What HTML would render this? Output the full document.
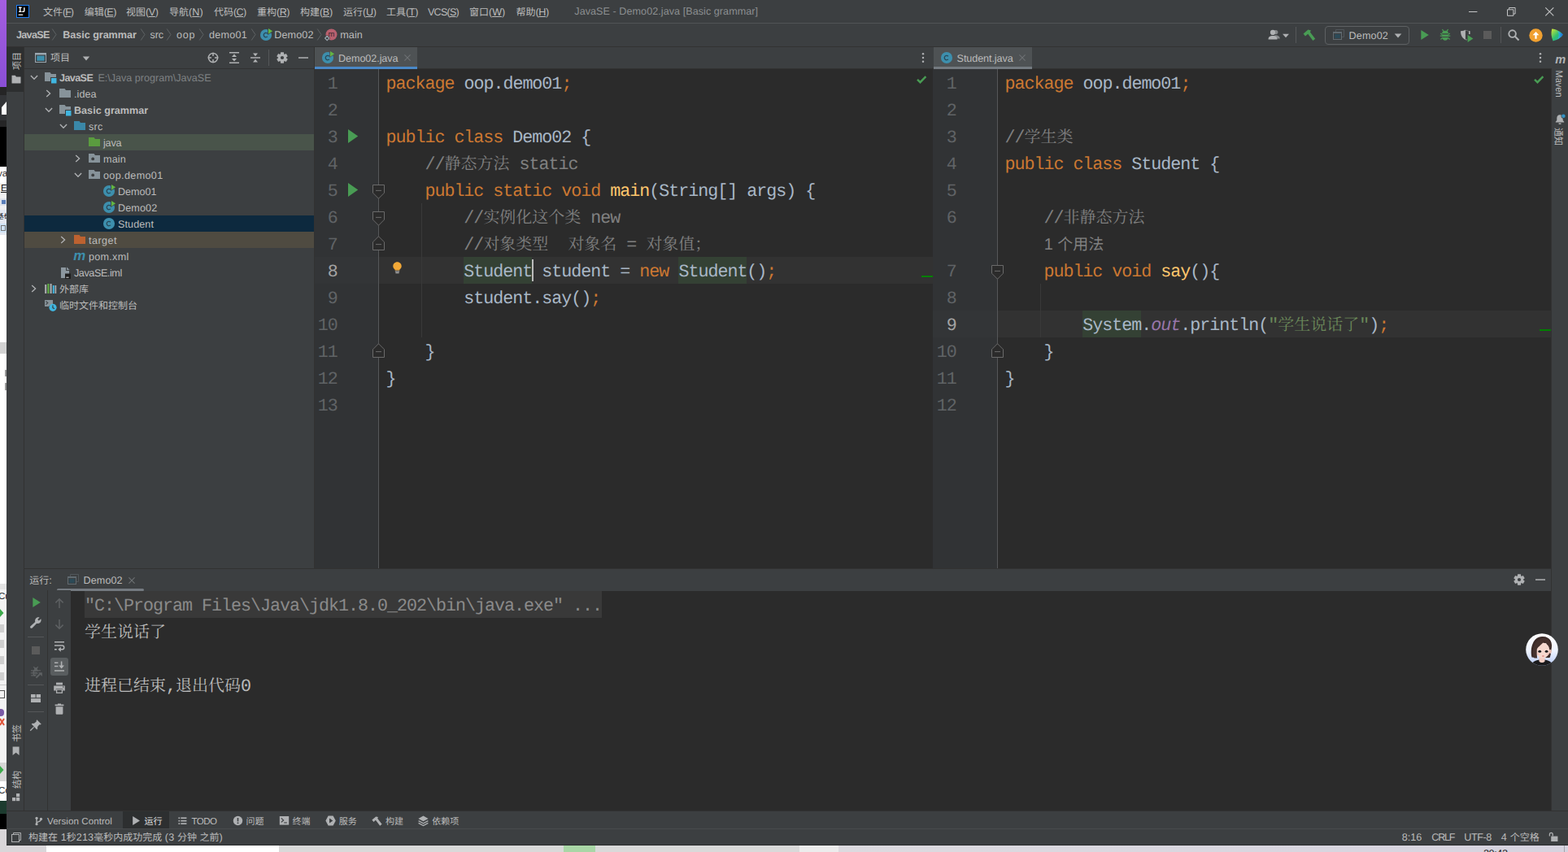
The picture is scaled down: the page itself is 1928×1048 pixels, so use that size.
<!DOCTYPE html>
<html lang="zh-CN"><head><meta charset="utf-8"><title>JavaSE - Demo02.java [Basic grammar]</title>
<style>
html,body{margin:0;padding:0}
body{width:1928px;height:1048px;overflow:hidden;position:relative;background:#3c3f41;color:#bbbbbb;
 font-family:"Liberation Sans","Noto Sans CJK SC",sans-serif;font-size:12px;text-rendering:geometricPrecision}
div,span.t,svg.i{position:absolute}
span.t,div.t{white-space:pre}
span.z{font-family:"Liberation Sans","Noto Sans CJK SC",sans-serif;letter-spacing:0}
span.zr{font-family:"Liberation Serif","Noto Serif CJK SC",serif;letter-spacing:0;font-size:20px}
svg.i{display:block;overflow:visible}
div.c{font-family:"Liberation Mono",monospace;font-size:21.66px;letter-spacing:-0.9981px;line-height:33px;height:33px;white-space:pre}
div.c span{position:static}
u{text-decoration-thickness:1px;text-underline-offset:1px}
</style></head>
<body>
<div style="left:0px;top:0px;width:8px;height:107px;background:linear-gradient(180deg,#a45ee0,#8a4fd6);"></div>
<div style="left:0px;top:107px;width:8px;height:10px;background:#252526;"></div>
<div style="left:0px;top:117px;width:8px;height:31px;background:#323437;"></div>
<svg class="i" style="left:0px;top:124px;" width="8" height="18" viewBox="0 0 8 18"><path d="M2 8 8 1V17H2Z" fill="#fff"/></svg>
<div style="left:0px;top:148px;width:8px;height:8px;background:#252526;"></div>
<div style="left:0px;top:156px;width:8px;height:49px;background:#000;"></div>
<div style="left:0px;top:205px;width:8px;height:835px;background:#fff;"></div>
<div style="left:0px;top:225px;width:8px;height:33px;background:#f0f0f0;"></div>
<span class="t" style="left:-3px;top:206px;line-height:16px;font-size:11.55px;color:#333;">va</span>
<span class="t" style="left:1px;top:224px;line-height:16px;font-size:11.55px;color:#111;text-decoration:underline;">E</span>
<div style="left:0px;top:244px;width:8px;height:9px;background:#dfe3ea;"></div>
<div style="left:2px;top:246px;width:5px;height:5px;background:#5b7fb8;"></div>
<div style="left:0px;top:258px;width:8px;height:31px;background:#e3e8f1;"></div>
<div style="left:0px;top:262px;width:8px;height:10px;overflow:hidden;color:#111;line-height:10px;font-size:10px;text-indent:-5px;white-space:nowrap;"><span class="z" style="font-size:10px;">基础</span></div>
<div style="left:0px;top:275px;width:8px;height:11px;background:#cfe3f7;"></div>
<div style="left:1px;top:277px;width:6px;height:7px;border:1px solid #777;box-sizing:border-box;"></div>
<div style="left:0px;top:421px;width:8px;height:14px;background:#d2d2d2;"></div>
<div style="left:6px;top:455px;width:2px;height:8px;background:#9a9a9a;"></div>
<div style="left:6px;top:471px;width:2px;height:9px;background:#9a9a9a;"></div>
<div style="left:0px;top:718px;width:8px;height:7px;background:#e4e4e4;"></div>
<div style="left:0px;top:725px;width:8px;height:213px;background:#f3f3f3;"></div>
<span class="t" style="left:-2px;top:726px;line-height:16px;font-size:11.55px;color:#222;">Cur</span>
<svg class="i" style="left:0px;top:749px;" width="8" height="10" viewBox="0 0 8 10"><path d="M0 0 4.5 5 0 10Z" fill="#3daa4c"/></svg>
<div style="left:0px;top:768px;width:5px;height:10px;background:#cfcfcf;"></div>
<div style="left:0px;top:787px;width:5px;height:10px;background:#cfcfcf;"></div>
<div style="left:0px;top:807px;width:5px;height:10px;background:#cfcfcf;"></div>
<div style="left:0px;top:827px;width:5px;height:10px;background:#cfcfcf;"></div>
<div style="left:0px;top:842px;width:8px;height:1px;background:#c9c9c9;"></div>
<div style="left:0px;top:849px;width:6px;height:10px;border:1.5px solid #555;border-left:0;box-sizing:border-box;"></div>
<div style="left:0px;top:872px;width:5px;height:9px;background:#7a5aa6;border-radius:0 4px 4px 0;"></div>
<svg class="i" style="left:0px;top:883px;" width="8" height="10" viewBox="0 0 8 10"><path d="M0 1 5 9M5 1 0 9" stroke="#e0553a" stroke-width="2"/></svg>
<div style="left:0px;top:938px;width:8px;height:23px;background:#d6d6d6;"></div>
<svg class="i" style="left:0px;top:942px;" width="8" height="10" viewBox="0 0 8 10"><path d="M0 0 4.5 5 0 10Z" fill="#3daa4c"/></svg>
<span class="t" style="left:-2px;top:965px;line-height:16px;font-size:11.55px;color:#222;">Co</span>
<div style="left:0px;top:985px;width:8px;height:16px;background:#1d3b2f;"></div>
<div style="left:0px;top:1001px;width:8px;height:19px;background:#000;"></div>
<div style="left:0px;top:1020px;width:8px;height:28px;background:#d9d6d9;"></div>
<div style="left:0px;top:1040px;width:57px;height:8px;background:#d9d6d9;"></div>
<div style="left:57px;top:1040px;width:286px;height:8px;background:#ffffff;"></div>
<div style="left:343px;top:1040px;width:350px;height:8px;background:#d9d9d9;"></div>
<div style="left:693px;top:1040px;width:39px;height:8px;background:#a9d6a6;"></div>
<div style="left:732px;top:1040px;width:251px;height:8px;background:#d9d9d9;"></div>
<div style="left:983px;top:1040px;width:48px;height:8px;background:#ececec;"></div>
<div style="left:1031px;top:1040px;width:897px;height:8px;background:linear-gradient(90deg,#dcdadf,#d6d3df);"></div>
<span class="t" style="left:1824px;top:1042px;line-height:16px;font-size:12.6px;color:#222;letter-spacing:-0.406px;">20:42</span>
<div style="left:1923px;top:1040px;width:1px;height:8px;background:#a5a3aa;"></div>
<div style="left:8px;top:0px;width:1920px;height:28px;background:#3c3f41;"></div>
<div style="left:8px;top:28px;width:1920px;height:1px;background:#515456;"></div>
<svg class="i" style="left:20px;top:6px;" width="16" height="16" viewBox="0 0 16 16"><rect x="0.5" y="0.5" width="15" height="15" fill="#000" stroke="#1f7ff5" stroke-width="1"/><path d="M3 3.3H6.6M4.8 3.3V8.4M3 8.4H6.6" stroke="#fff" stroke-width="1.4" fill="none"/><path d="M9.8 3.3V7.2C9.8 8.5 8.2 8.8 7.4 7.8" stroke="#fff" stroke-width="1.4" fill="none"/><rect x="2.6" y="11.6" width="5.6" height="1.2" fill="#fff"/></svg>
<span class="t" style="left:53px;top:7px;line-height:16px;font-size:12.6px;letter-spacing:-1.029px;"><span class="z" style="font-size:12px;">文件</span>(<u>F</u>)</span>
<span class="t" style="left:103.7px;top:7px;line-height:16px;font-size:12.6px;letter-spacing:-0.599px;"><span class="z" style="font-size:12px;">编辑</span>(<u>E</u>)</span>
<span class="t" style="left:155px;top:7px;line-height:16px;font-size:12.6px;letter-spacing:-0.399px;"><span class="z" style="font-size:12px;">视图</span>(<u>V</u>)</span>
<span class="t" style="left:208px;top:7px;line-height:16px;font-size:12.6px;letter-spacing:0.103px;"><span class="z" style="font-size:12px;">导航</span>(<u>N</u>)</span>
<span class="t" style="left:263px;top:7px;line-height:16px;font-size:12.6px;letter-spacing:-0.664px;"><span class="z" style="font-size:12px;">代码</span>(<u>C</u>)</span>
<span class="t" style="left:316px;top:7px;line-height:16px;font-size:12.6px;letter-spacing:-0.564px;"><span class="z" style="font-size:12px;">重构</span>(<u>R</u>)</span>
<span class="t" style="left:369px;top:7px;line-height:16px;font-size:12.6px;letter-spacing:-0.365px;"><span class="z" style="font-size:12px;">构建</span>(<u>B</u>)</span>
<span class="t" style="left:422px;top:7px;line-height:16px;font-size:12.6px;letter-spacing:-0.330px;"><span class="z" style="font-size:12px;">运行</span>(<u>U</u>)</span>
<span class="t" style="left:475px;top:7px;line-height:16px;font-size:12.6px;letter-spacing:-0.363px;"><span class="z" style="font-size:12px;">工具</span>(<u>T</u>)</span>
<span class="t" style="left:526px;top:7px;line-height:16px;font-size:12.6px;letter-spacing:-0.784px;">VCS(<u>S</u>)</span>
<span class="t" style="left:577px;top:7px;line-height:16px;font-size:12.6px;letter-spacing:-0.095px;"><span class="z" style="font-size:12px;">窗口</span>(<u>W</u>)</span>
<span class="t" style="left:634.5px;top:7px;line-height:16px;font-size:12.6px;letter-spacing:-0.430px;"><span class="z" style="font-size:12px;">帮助</span>(<u>H</u>)</span>
<span class="t" style="left:706.3px;top:6px;line-height:16px;font-size:12.6px;color:#8b8e90;letter-spacing:0.051px;">JavaSE - Demo02.java [Basic grammar]</span>
<svg class="i" style="left:1806px;top:9px;" width="11" height="11" viewBox="0 0 11 11"><rect x="0" y="5" width="10.4" height="1" fill="#c4c5c6"/></svg>
<svg class="i" style="left:1853px;top:9px;" width="11" height="11" viewBox="0 0 11 11"><path d="M0.5 2.8H7.9V10.3H0.5Z" fill="none" stroke="#c4c5c6"/><path d="M2.6 2.6V0.5H10.1V8H8" fill="none" stroke="#c4c5c6"/></svg>
<svg class="i" style="left:1900px;top:9px;" width="11" height="11" viewBox="0 0 11 11"><path d="M0.3 0.3 10.3 10.3M10.3 0.3 0.3 10.3" stroke="#c4c5c6" stroke-width="1.05"/></svg>
<div style="left:8px;top:29px;width:1920px;height:28px;background:#3c3f41;"></div>
<div style="left:8px;top:57px;width:1920px;height:1px;background:#323232;"></div>
<span class="t" style="left:20px;top:35px;line-height:16px;font-size:12.6px;font-weight:bold;letter-spacing:-0.706px;">JavaSE</span>
<svg class="i" style="left:63.2px;top:35px;" width="8" height="15" viewBox="0 0 8 15"><path d="M1.2 0.5 6 7.5 1.2 14.5" fill="none" stroke="#5f6365" stroke-width="1"/></svg>
<span class="t" style="left:77.3px;top:35px;line-height:16px;font-size:12.6px;font-weight:bold;letter-spacing:-0.042px;">Basic grammar</span>
<svg class="i" style="left:171.6px;top:35px;" width="8" height="15" viewBox="0 0 8 15"><path d="M1.2 0.5 6 7.5 1.2 14.5" fill="none" stroke="#5f6365" stroke-width="1"/></svg>
<span class="t" style="left:184.5px;top:35px;line-height:16px;font-size:12.6px;letter-spacing:-0.165px;">src</span>
<svg class="i" style="left:203.9px;top:35px;" width="8" height="15" viewBox="0 0 8 15"><path d="M1.2 0.5 6 7.5 1.2 14.5" fill="none" stroke="#5f6365" stroke-width="1"/></svg>
<span class="t" style="left:217.1px;top:35px;line-height:16px;font-size:12.6px;letter-spacing:0.759px;">oop</span>
<svg class="i" style="left:244.2px;top:35px;" width="8" height="15" viewBox="0 0 8 15"><path d="M1.2 0.5 6 7.5 1.2 14.5" fill="none" stroke="#5f6365" stroke-width="1"/></svg>
<span class="t" style="left:257.1px;top:35px;line-height:16px;font-size:12.6px;letter-spacing:0.211px;">demo01</span>
<svg class="i" style="left:307.7px;top:35px;" width="8" height="15" viewBox="0 0 8 15"><path d="M1.2 0.5 6 7.5 1.2 14.5" fill="none" stroke="#5f6365" stroke-width="1"/></svg>
<svg class="i" style="left:319px;top:34.5px;" width="16" height="16" viewBox="0 0 16 16"><circle cx="8" cy="8" r="7.05" fill="#3d8fad"/><path d="M9.9 6.2A2.7 2.7 0 1 0 9.9 9.9" fill="none" stroke="#294858" stroke-width="1.25"/><path d="M10.2 -1.2V8L17.2 3.3Z" fill="#3c3f41"/><path d="M11 -0.1V6.7L16.1 3.3Z" fill="#62b543"/></svg>
<span class="t" style="left:337.3px;top:35px;line-height:16px;font-size:12.6px;letter-spacing:0.112px;">Demo02</span>
<svg class="i" style="left:389px;top:35px;" width="8" height="15" viewBox="0 0 8 15"><path d="M1.2 0.5 6 7.5 1.2 14.5" fill="none" stroke="#5f6365" stroke-width="1"/></svg>
<svg class="i" style="left:398.5px;top:34.5px;" width="16" height="16" viewBox="0 0 16 16"><circle cx="8.5" cy="7.5" r="7" fill="#b8606f"/><text x="8.5" y="10.3" font-size="9.5" text-anchor="middle" fill="#3a2a2e" font-family="Liberation Sans" >m</text><path d="M3.2 8 7.2 12 3.2 16 -0.8 12Z" fill="#3c3f41"/><path d="M3.2 9.4 5.8 12 3.2 14.6 0.6 12Z" fill="none" stroke="#9aa7b0" stroke-width="1.1"/></svg>
<span class="t" style="left:418.3px;top:35px;line-height:16px;font-size:12.6px;letter-spacing:0.072px;">main</span>
<svg class="i" style="left:1559px;top:35px;" width="16" height="16" viewBox="0 0 16 16"><circle cx="9.7" cy="4.6" r="2.7" fill="#85888a"/><path d="M6.5 12.5C6.5 9.5 8 8.3 9.7 8.3S14.8 9.5 14.8 12.5Z" fill="#85888a"/><circle cx="6" cy="4.9" r="3.1" fill="#afb1b3"/><path d="M0.5 13.5C0.5 10 3 9 6 9S11.5 10 11.5 13.5Z" fill="#afb1b3"/></svg>
<svg class="i" style="left:1573px;top:36.2px;" width="16" height="16" viewBox="0 0 16 16"><path d="M4 5.8 H12 L8 10.2 Z" fill="#afb1b3"/></svg>
<div style="left:1593px;top:33px;width:1px;height:20px;background:#555759;"></div>
<svg class="i" style="left:1602px;top:35.5px;" width="16" height="16" viewBox="0 0 16 16"><path d="M0.6 5.6 6.4 0.6 10 1.4 8.9 3.5 15.2 11.8 12.4 14 6.2 5.8 3 8.4Z" fill="#499c54"/></svg>
<div style="left:1629px;top:32px;width:103.8px;height:22.5px;border:1px solid #5e6163;border-radius:4px;box-sizing:border-box;"></div>
<svg class="i" style="left:1638px;top:35px;" width="16" height="16" viewBox="0 0 16 16"><path d="M4.5 4.5V1.5H14.5V10.5H12" fill="none" stroke="#50565a" stroke-width="1"/><rect x="1.5" y="4.5" width="10" height="9" fill="none" stroke="#606a70" stroke-width="1"/><rect x="1" y="4" width="11" height="2" fill="#606a70"/><rect x="3.2" y="7" width="6.6" height="5" fill="#2c4a57"/></svg>
<span class="t" style="left:1658.6px;top:36px;line-height:16px;font-size:12.6px;letter-spacing:0.112px;">Demo02</span>
<svg class="i" style="left:1711px;top:35.6px;" width="16" height="16" viewBox="0 0 16 16"><path d="M3.7 5.5 H12.3 L8 10.5 Z" fill="#afb1b3"/></svg>
<svg class="i" style="left:1743.5px;top:35px;" width="16" height="16" viewBox="0 0 16 16"><path d="M3.3 2 12.8 8 3.3 14Z" fill="#499c54"/></svg>
<svg class="i" style="left:1769px;top:35px;" width="16" height="16" viewBox="0 0 16 16"><path d="M4.4 1.2 6.3 3.6M11.6 1.2 9.7 3.6" stroke="#499c54" stroke-width="1.25"/><path d="M4.1 6.3A3.9 3.6 0 0 1 11.9 6.3Z" fill="#499c54"/><path d="M4.1 7.5H11.9V10.2A3.9 4.6 0 0 1 4.1 10.2Z" fill="#499c54"/><path d="M4.3 9H1.7M11.7 9H14.3M4.4 7.6 2.3 5.9M11.6 7.6 13.7 5.9M4.6 11.6 2.4 13.4M11.4 11.6 13.6 13.4" stroke="#499c54" stroke-width="1.25"/><path d="M4.2 10.6H11.8" stroke="#3c3f41" stroke-width="1"/></svg>
<svg class="i" style="left:1794.6px;top:36px;" width="17" height="16" viewBox="0 0 17 16"><path d="M1 2.2C4 2.2 5.5 1.6 6.8 0.8 8.2 1.6 9.8 2.2 12.6 2.2V6H8.5V13.6C4 11.8 1 8.6 1 2.2Z" fill="#afb1b3"/><path d="M6.8 2.6V12.2C5.8 11.6 4.7 10.7 4 9.6 3 8 2.7 6 2.7 3.6 4.5 3.5 5.8 3.1 6.8 2.6Z" fill="#3c3f41" opacity=".0"/><path d="M6.9 1V13C9 12 9.2 11 9.2 11V6.4H11V2.3C9 2.2 7.9 1.7 6.9 1Z" fill="#3c3f41"/><path d="M9.6 7.1 16.4 11.5 9.6 15.9Z" fill="#499c54"/></svg>
<svg class="i" style="left:1821px;top:35.2px;" width="16" height="16" viewBox="0 0 16 16"><rect x="3" y="3" width="10" height="10" fill="#5b5b5b"/></svg>
<div style="left:1845px;top:33px;width:1px;height:20px;background:#555759;"></div>
<svg class="i" style="left:1853.3px;top:35.2px;" width="16" height="16" viewBox="0 0 16 16"><circle cx="6.6" cy="6.6" r="4.3" fill="none" stroke="#afb1b3" stroke-width="1.9"/><path d="M9.8 9.8 14.5 14.5" stroke="#afb1b3" stroke-width="2.1"/></svg>
<svg class="i" style="left:1879.5px;top:34.5px;" width="17" height="17" viewBox="0 0 17 17"><circle cx="8.5" cy="8.5" r="8.2" fill="#f0a030"/><path d="M8.5 4 12.4 8.2H9.6V12.8H7.4V8.2H4.6Z" fill="#fff"/></svg>
<svg class="i" style="left:1906.5px;top:35.2px;" width="16" height="16" viewBox="0 0 16 16"><defs><linearGradient id="cgx1" x1="0" y1="0" x2="1" y2="1"><stop offset="0" stop-color="#d7e436"/><stop offset=".5" stop-color="#2fbf71"/><stop offset="1" stop-color="#1fa3c4"/></linearGradient><linearGradient id="cgx2" x1="0" y1="0" x2="1" y2="0"><stop offset="0" stop-color="#36c6d8"/><stop offset="1" stop-color="#1b66d9"/></linearGradient></defs><path d="M1.2 0.6C7 1.2 12 4 14.8 7.6 12.5 11.4 7.5 14.4 2.6 15.4 0.2 10.5 0 5.5 1.2 0.6Z" fill="url(#cgx1)"/><path d="M8.2 3.2C11 4.2 13.4 5.8 14.8 7.6 13.4 9.9 11 11.9 8.3 13.3 10.3 10 10.3 6.5 8.2 3.2Z" fill="url(#cgx2)"/></svg>
<div style="left:8px;top:58px;width:21px;height:939px;background:#3c3f41;"></div>
<div style="left:29px;top:58px;width:1px;height:939px;background:#323232;"></div>
<div style="left:8px;top:58px;width:21px;height:55px;background:#2d2f30;"></div>
<div class="t" style="left:11.2px;top:67.9px;width:22px;height:14px;line-height:14px;font-size:11px;text-align:center;transform:rotate(-90deg) scale(1,1.1);transform-origin:center center;"><span class="z" style="font-size:11px;">项目</span></div>
<svg class="i" style="left:14px;top:92.3px;" width="12" height="11" viewBox="0 0 12 11"><path d="M0.5 10.5H11.5V2.6H6L4.8 0.8H0.5Z" fill="#afb1b3"/></svg>
<div class="t" style="left:11px;top:894.6px;width:22px;height:14px;line-height:14px;font-size:11px;text-align:center;transform:rotate(-90deg) scale(1,1.1);transform-origin:center center;"><span class="z" style="font-size:11px;">书签</span></div>
<svg class="i" style="left:15px;top:918px;" width="9" height="11.5" viewBox="0 0 9 11.5"><path d="M0.6 0.5H8.6V11L4.6 7.8 0.6 11Z" fill="#afb1b3"/></svg>
<div class="t" style="left:11px;top:952.2px;width:22px;height:14px;line-height:14px;font-size:11px;text-align:center;transform:rotate(-90deg) scale(1,1.1);transform-origin:center center;"><span class="z" style="font-size:11px;">结构</span></div>
<svg class="i" style="left:14.8px;top:976px;" width="9.5" height="9.5" viewBox="0 0 9.5 9.5"><rect x="5" y="0" width="4.2" height="4.2" fill="#afb1b3"/><rect x="0" y="5" width="4.2" height="4.2" fill="#afb1b3"/><rect x="5" y="5" width="4.2" height="4.2" fill="#afb1b3"/></svg>
<div style="left:1907px;top:58px;width:1px;height:939px;background:#323232;"></div>
<div style="left:1908px;top:58px;width:20px;height:939px;background:#3c3f41;"></div>
<svg class="i" style="left:1911.5px;top:68px;" width="14" height="12" viewBox="0 0 14 12"><text x="0.3" y="10" font-size="15" font-weight="bold" font-style="italic" fill="#afb1b3" font-family="Liberation Sans" textLength="13" lengthAdjust="spacingAndGlyphs">m</text></svg>
<div class="t" style="left:1898.7px;top:96.3px;width:35px;height:14px;line-height:14px;font-size:11px;text-align:center;transform:rotate(90deg) scale(1,1.1);transform-origin:center center;">Maven</div>
<svg class="i" style="left:1912px;top:139.8px;" width="13.5" height="13.5" viewBox="0 0 13.5 13.5"><path d="M6 1.2C3.4 1.2 2.3 3.2 2.3 5.4V8L0.8 9.8V10.6H11.2V9.8L9.7 8V5.4C9.7 3.2 8.6 1.2 6 1.2Z" fill="#afb1b3"/><rect x="4.6" y="11.4" width="2.8" height="1.5" fill="#afb1b3"/><circle cx="10.4" cy="2.8" r="2.9" fill="#3c3f41"/><circle cx="10.4" cy="2.8" r="2.3" fill="#3592c4"/></svg>
<div class="t" style="left:1904.2px;top:161.3px;width:22px;height:14px;line-height:14px;font-size:11px;text-align:center;transform:rotate(90deg) scale(1,1.1);transform-origin:center center;"><span class="z" style="font-size:11px;">通知</span></div>
<div style="left:30px;top:58px;width:356px;height:641px;background:#3c3f41;"></div>
<div style="left:30px;top:84px;width:356px;height:1px;background:#323232;"></div>
<div style="left:386px;top:58px;width:1px;height:641px;background:#323232;"></div>
<svg class="i" style="left:42px;top:62.5px;" width="16" height="16" viewBox="0 0 16 16"><rect x="1.5" y="2.5" width="13" height="11" fill="none" stroke="#9aa7b0" stroke-width="1"/><rect x="1" y="2" width="14" height="2.5" fill="#9aa7b0"/><rect x="3.3" y="5.6" width="9.4" height="6.2" fill="#3d8fad"/></svg>
<span class="t" style="left:62px;top:63px;line-height:16px;font-size:12.6px;"><span class="z" style="font-size:12px;">项目</span></span>
<svg class="i" style="left:98px;top:64.4px;" width="16" height="16" viewBox="0 0 16 16"><path d="M3.8 5.5 H12.2 L8 10.5 Z" fill="#afb1b3"/></svg>
<svg class="i" style="left:254px;top:63px;" width="16" height="16" viewBox="0 0 16 16"><circle cx="8" cy="8" r="5.6" fill="none" stroke="#afb1b3" stroke-width="1.5"/><path d="M8 1.7V6M8 10V14.3M1.7 8H6M10 8H14.3" stroke="#afb1b3" stroke-width="1.5"/></svg>
<svg class="i" style="left:280px;top:63px;" width="16" height="16" viewBox="0 0 16 16"><path d="M2 1.7H14M2 14.3H14" stroke="#afb1b3" stroke-width="1.5"/><path d="M8 3.6 11 7H5ZM8 12.4 11 9H5Z" fill="#afb1b3"/></svg>
<svg class="i" style="left:306px;top:63px;" width="16" height="16" viewBox="0 0 16 16"><path d="M2 8H14" stroke="#afb1b3" stroke-width="1.5"/><path d="M8 6.2 11 2.6H5ZM8 9.8 11 13.4H5Z" fill="#afb1b3"/></svg>
<div style="left:330px;top:61px;width:1px;height:20px;background:#555759;"></div>
<svg class="i" style="left:339px;top:63px;" width="16" height="16" viewBox="0 0 16 16"><g transform="translate(8 8)"><path d="M-1.9 -6.7H1.9L2.3 -3.6H-2.3Z" fill="#afb1b3" transform="rotate(0)"/><path d="M-1.9 -6.7H1.9L2.3 -3.6H-2.3Z" fill="#afb1b3" transform="rotate(60)"/><path d="M-1.9 -6.7H1.9L2.3 -3.6H-2.3Z" fill="#afb1b3" transform="rotate(120)"/><path d="M-1.9 -6.7H1.9L2.3 -3.6H-2.3Z" fill="#afb1b3" transform="rotate(180)"/><path d="M-1.9 -6.7H1.9L2.3 -3.6H-2.3Z" fill="#afb1b3" transform="rotate(240)"/><path d="M-1.9 -6.7H1.9L2.3 -3.6H-2.3Z" fill="#afb1b3" transform="rotate(300)"/><circle r="3.55" fill="none" stroke="#afb1b3" stroke-width="2.9"/></g></svg>
<svg class="i" style="left:365px;top:63px;" width="16" height="16" viewBox="0 0 16 16"><rect x="2" y="7.3" width="12" height="1.5" fill="#afb1b3"/></svg>
<svg class="i" style="left:33.5px;top:86.7px;" width="16" height="16" viewBox="0 0 16 16"><path d="M3.9 6 8 10.3 12.1 6" fill="none" stroke="#afb1b3" stroke-width="1.35"/></svg>
<svg class="i" style="left:54px;top:87px;" width="16" height="16" viewBox="0 0 16 16"><path d="M1 13H8V8H15V4H9L7.57 2H1Z" fill="#87939a"/><rect x="9" y="9" width="6.5" height="6.5" fill="#40b6e0"/></svg>
<span class="t" style="left:73px;top:88px;line-height:16px;font-size:12.6px;font-weight:bold;letter-spacing:-0.606px;">JavaSE</span>
<span class="t" style="left:120.4px;top:88px;line-height:16px;font-size:12.6px;color:#7e8183;letter-spacing:-0.007px;">E:\Java program\JavaSE</span>
<svg class="i" style="left:51.2px;top:106.8px;" width="16" height="16" viewBox="0 0 16 16"><path d="M6.2 3.9 10.6 8 6.2 12.1" fill="none" stroke="#afb1b3" stroke-width="1.35"/></svg>
<svg class="i" style="left:72px;top:107px;" width="16" height="16" viewBox="0 0 16 16"><path d="M1 13H15V4H9L7.57 2H1Z" fill="#87939a"/></svg>
<span class="t" style="left:91px;top:108px;line-height:16px;font-size:12.6px;letter-spacing:0.075px;">.idea</span>
<svg class="i" style="left:51.5px;top:126.7px;" width="16" height="16" viewBox="0 0 16 16"><path d="M3.9 6 8 10.3 12.1 6" fill="none" stroke="#afb1b3" stroke-width="1.35"/></svg>
<svg class="i" style="left:72px;top:127px;" width="16" height="16" viewBox="0 0 16 16"><path d="M1 13H8V8H15V4H9L7.57 2H1Z" fill="#87939a"/><rect x="9" y="9" width="6.5" height="6.5" fill="#40b6e0"/></svg>
<span class="t" style="left:91px;top:128px;line-height:16px;font-size:12.6px;font-weight:bold;letter-spacing:0.012px;">Basic grammar</span>
<svg class="i" style="left:69.5px;top:146.7px;" width="16" height="16" viewBox="0 0 16 16"><path d="M3.9 6 8 10.3 12.1 6" fill="none" stroke="#afb1b3" stroke-width="1.35"/></svg>
<svg class="i" style="left:90px;top:147px;" width="16" height="16" viewBox="0 0 16 16"><path d="M1 13H15V4H9L7.57 2H1Z" fill="#3a87a8"/></svg>
<span class="t" style="left:109px;top:148px;line-height:16px;font-size:12.6px;letter-spacing:0.201px;">src</span>
<div style="left:30px;top:165px;width:356px;height:20px;background:#49544a;"></div>
<svg class="i" style="left:108px;top:167px;" width="16" height="16" viewBox="0 0 16 16"><path d="M1 13H15V4H9L7.57 2H1Z" fill="#5a9c3f"/></svg>
<span class="t" style="left:127px;top:168px;line-height:16px;font-size:12.6px;letter-spacing:-0.179px;">java</span>
<svg class="i" style="left:87.2px;top:186.8px;" width="16" height="16" viewBox="0 0 16 16"><path d="M6.2 3.9 10.6 8 6.2 12.1" fill="none" stroke="#afb1b3" stroke-width="1.35"/></svg>
<svg class="i" style="left:108px;top:187px;" width="16" height="16" viewBox="0 0 16 16"><path d="M1 13H15V4H9L7.57 2H1Z" fill="#87939a"/><circle cx="6.2" cy="8.4" r="1.9" fill="#3c3f41"/></svg>
<span class="t" style="left:127px;top:188px;line-height:16px;font-size:12.6px;letter-spacing:0.172px;">main</span>
<svg class="i" style="left:87.5px;top:206.7px;" width="16" height="16" viewBox="0 0 16 16"><path d="M3.9 6 8 10.3 12.1 6" fill="none" stroke="#afb1b3" stroke-width="1.35"/></svg>
<svg class="i" style="left:108px;top:207px;" width="16" height="16" viewBox="0 0 16 16"><path d="M1 13H15V4H9L7.57 2H1Z" fill="#87939a"/><circle cx="6.2" cy="8.4" r="1.9" fill="#3c3f41"/></svg>
<span class="t" style="left:127px;top:208px;line-height:16px;font-size:12.6px;letter-spacing:0.354px;">oop.demo01</span>
<svg class="i" style="left:126px;top:227px;" width="16" height="16" viewBox="0 0 16 16"><circle cx="8" cy="8" r="7.05" fill="#3d8fad"/><path d="M9.9 6.2A2.7 2.7 0 1 0 9.9 9.9" fill="none" stroke="#294858" stroke-width="1.25"/><path d="M10.2 -1.2V8L17.2 3.3Z" fill="#3c3f41"/><path d="M11 -0.1V6.7L16.1 3.3Z" fill="#62b543"/></svg>
<span class="t" style="left:145px;top:228px;line-height:16px;font-size:12.6px;letter-spacing:-0.004px;">Demo01</span>
<svg class="i" style="left:126px;top:247px;" width="16" height="16" viewBox="0 0 16 16"><circle cx="8" cy="8" r="7.05" fill="#3d8fad"/><path d="M9.9 6.2A2.7 2.7 0 1 0 9.9 9.9" fill="none" stroke="#294858" stroke-width="1.25"/><path d="M10.2 -1.2V8L17.2 3.3Z" fill="#3c3f41"/><path d="M11 -0.1V6.7L16.1 3.3Z" fill="#62b543"/></svg>
<span class="t" style="left:145px;top:248px;line-height:16px;font-size:12.6px;letter-spacing:0.112px;">Demo02</span>
<div style="left:30px;top:265px;width:356px;height:20px;background:#0d293e;"></div>
<svg class="i" style="left:126px;top:267px;" width="16" height="16" viewBox="0 0 16 16"><circle cx="8" cy="8" r="7.05" fill="#3d8fad"/><path d="M9.9 6.2A2.7 2.7 0 1 0 9.9 9.9" fill="none" stroke="#294858" stroke-width="1.25"/></svg>
<span class="t" style="left:145px;top:268px;line-height:16px;font-size:12.6px;letter-spacing:0.081px;">Student</span>
<div style="left:30px;top:285px;width:356px;height:20px;background:#4f4b41;"></div>
<svg class="i" style="left:69.2px;top:286.8px;" width="16" height="16" viewBox="0 0 16 16"><path d="M6.2 3.9 10.6 8 6.2 12.1" fill="none" stroke="#afb1b3" stroke-width="1.35"/></svg>
<svg class="i" style="left:90px;top:287px;" width="16" height="16" viewBox="0 0 16 16"><path d="M1 13H15V4H9L7.57 2H1Z" fill="#bd6230"/></svg>
<span class="t" style="left:109px;top:288px;line-height:16px;font-size:12.6px;letter-spacing:0.463px;">target</span>
<svg class="i" style="left:90px;top:307px;" width="16" height="16" viewBox="0 0 16 16"><text x="0.2" y="13" font-size="17" font-weight="bold" font-style="italic" fill="#3d8fad" font-family="Liberation Sans" textLength="15" lengthAdjust="spacingAndGlyphs">m</text></svg>
<span class="t" style="left:109px;top:308px;line-height:16px;font-size:12.6px;letter-spacing:0.270px;">pom.xml</span>
<svg class="i" style="left:72px;top:327px;" width="16" height="16" viewBox="0 0 16 16"><path d="M3 2H9V6H13V15H3Z" fill="#9aa7b0" opacity=".85"/><path d="M10 1.4V5H13.6Z" fill="#9aa7b0" opacity=".85"/><rect x="8" y="9.5" width="7" height="6.5" fill="#1e1e1e"/><rect x="9.3" y="13.7" width="3.3" height="1" fill="#ddd"/></svg>
<span class="t" style="left:91px;top:328px;line-height:16px;font-size:12.6px;letter-spacing:-0.422px;">JavaSE.iml</span>
<svg class="i" style="left:33.2px;top:346.8px;" width="16" height="16" viewBox="0 0 16 16"><path d="M6.2 3.9 10.6 8 6.2 12.1" fill="none" stroke="#afb1b3" stroke-width="1.35"/></svg>
<svg class="i" style="left:54px;top:347px;" width="16" height="16" viewBox="0 0 16 16"><rect x="1.2" y="3" width="2" height="11" fill="#afb1b3"/><rect x="4.4" y="2" width="2" height="12" fill="#62b543"/><rect x="7.6" y="2" width="2" height="12" fill="#afb1b3"/><rect x="10.8" y="4" width="2" height="10" fill="#40b6e0"/><rect x="13.6" y="4" width="1.6" height="10" fill="#afb1b3"/></svg>
<span class="t" style="left:73px;top:348px;line-height:16px;font-size:12.6px;"><span class="z" style="font-size:12px;">外部库</span></span>
<svg class="i" style="left:54px;top:367px;" width="16" height="16" viewBox="0 0 16 16"><path d="M1 2H11V8H8.5A5 5 0 0 0 6 10H1Z" fill="#87939a"/><path d="M2.4 3.6 4.8 5.6 2.4 7.6" stroke="#3c3f41" fill="none" stroke-width="1.1"/><circle cx="11" cy="11.3" r="4.6" fill="#40b6e0"/><path d="M10.9 8.6V11.6L12.9 12.8" stroke="#3c3f41" fill="none" stroke-width="1.2"/></svg>
<span class="t" style="left:73px;top:368px;line-height:16px;font-size:12.6px;"><span class="z" style="font-size:12px;">临时文件和控制台</span></span>
<div style="left:387px;top:58px;width:761px;height:26px;background:#3c3f41;"></div>
<div style="left:387px;top:84px;width:761px;height:1px;background:#323232;"></div>
<div style="left:387px;top:58px;width:126px;height:24px;background:#4e5254;"></div>
<div style="left:387px;top:82px;width:126px;height:3px;background:#4a88c7;"></div>
<svg class="i" style="left:395px;top:63px;" width="16" height="16" viewBox="0 0 16 16"><circle cx="8" cy="8" r="7.05" fill="#3d8fad"/><path d="M9.9 6.2A2.7 2.7 0 1 0 9.9 9.9" fill="none" stroke="#294858" stroke-width="1.25"/><path d="M10.2 -1.2V8L17.2 3.3Z" fill="#4e5254"/><path d="M11 -0.1V6.7L16.1 3.3Z" fill="#62b543"/></svg>
<span class="t" style="left:416px;top:64px;line-height:16px;font-size:12.6px;letter-spacing:-0.067px;">Demo02.java</span>
<svg class="i" style="left:493.1px;top:63.2px;" width="16" height="16" viewBox="0 0 16 16"><path d="M4.4 4.4L11.6 11.6M11.6 4.4L4.4 11.6" stroke="#6e7274" stroke-width="1.05"/></svg>
<svg class="i" style="left:1127.2px;top:63px;" width="16" height="16" viewBox="0 0 16 16"><circle cx="8" cy="3.2" r="1.25" fill="#afb1b3"/><circle cx="8" cy="8" r="1.25" fill="#afb1b3"/><circle cx="8" cy="12.8" r="1.25" fill="#afb1b3"/></svg>
<div style="left:387px;top:85px;width:78px;height:614px;background:#313335;"></div>
<div style="left:465px;top:85px;width:1px;height:614px;background:#555759;"></div>
<div style="left:466px;top:85px;width:681px;height:614px;background:#2b2b2b;"></div>
<div style="left:466px;top:316px;width:681px;height:33px;background:#323232;"></div>
<div style="left:387px;top:316px;width:78px;height:33px;background:#333537;"></div>
<div style="left:570.4px;top:316px;width:84px;height:33px;background:#344134;"></div>
<div style="left:518px;top:250px;width:1px;height:165px;background:#393939;"></div>
<div class="c" style="left:474.4px;top:86.7363px;color:#a9b7c6;"><span style="color:#cc7832;">package</span><span style="color:#a9b7c6;"> oop.demo01</span><span style="color:#cc7832;">;</span></div>
<div class="c" style="left:474.4px;top:152.736px;color:#a9b7c6;"><span style="color:#cc7832;">public class</span><span style="color:#a9b7c6;"> Demo02 {</span></div>
<div class="c" style="left:474.4px;top:185.736px;color:#a9b7c6;"><span style="color:#808080;">    //<span class="zr">静态方法</span> static</span></div>
<div class="c" style="left:474.4px;top:218.736px;color:#a9b7c6;"><span style="color:#cc7832;">    public static void</span><span style="color:#ffc66d;"> main</span><span style="color:#a9b7c6;">(String[] args) {</span></div>
<div class="c" style="left:474.4px;top:251.736px;color:#a9b7c6;"><span style="color:#808080;">        //<span class="zr">实例化这个类</span> new</span></div>
<div class="c" style="left:474.4px;top:284.736px;color:#a9b7c6;"><span style="color:#808080;">        //<span class="zr">对象类型</span>  <span class="zr">对象名</span> = <span class="zr">对象值；</span></span></div>
<div class="c" style="left:474.4px;top:317.736px;color:#a9b7c6;"><span style="color:#a9b7c6;">        Student student = </span><span style="color:#cc7832;">new</span><span style="color:#a9b7c6;"> Student()</span><span style="color:#cc7832;">;</span></div>
<div class="c" style="left:474.4px;top:350.736px;color:#a9b7c6;"><span style="color:#a9b7c6;">        student.say()</span><span style="color:#cc7832;">;</span></div>
<div class="c" style="left:474.4px;top:416.736px;color:#a9b7c6;"><span style="color:#a9b7c6;">    }</span></div>
<div class="c" style="left:474.4px;top:449.736px;color:#a9b7c6;"><span style="color:#a9b7c6;">}</span></div>
<div class="c" style="left:354.798px;top:86.7363px;width:60px;text-align:right;color:#606366;">1</div>
<div class="c" style="left:354.798px;top:119.736px;width:60px;text-align:right;color:#606366;">2</div>
<div class="c" style="left:354.798px;top:152.736px;width:60px;text-align:right;color:#606366;">3</div>
<div class="c" style="left:354.798px;top:185.736px;width:60px;text-align:right;color:#606366;">4</div>
<div class="c" style="left:354.798px;top:218.736px;width:60px;text-align:right;color:#606366;">5</div>
<div class="c" style="left:354.798px;top:251.736px;width:60px;text-align:right;color:#606366;">6</div>
<div class="c" style="left:354.798px;top:284.736px;width:60px;text-align:right;color:#606366;">7</div>
<div class="c" style="left:354.798px;top:317.736px;width:60px;text-align:right;color:#a4a3a3;">8</div>
<div class="c" style="left:354.798px;top:350.736px;width:60px;text-align:right;color:#606366;">9</div>
<div class="c" style="left:354.798px;top:383.736px;width:60px;text-align:right;color:#606366;">10</div>
<div class="c" style="left:354.798px;top:416.736px;width:60px;text-align:right;color:#606366;">11</div>
<div class="c" style="left:354.798px;top:449.736px;width:60px;text-align:right;color:#606366;">12</div>
<div class="c" style="left:354.798px;top:482.736px;width:60px;text-align:right;color:#606366;">13</div>
<svg class="i" style="left:458px;top:227px;" width="15" height="18" viewBox="0 0 15 18"><path d="M0.5 0.5H14.5V10.2L7.5 17.2 0.5 10.2Z" fill="#2b2b2b" stroke="#6a6a6a"/><path d="M4 7.4H11" stroke="#6a6a6a"/></svg>
<svg class="i" style="left:458px;top:260px;" width="15" height="18" viewBox="0 0 15 18"><path d="M0.5 0.5H14.5V10.2L7.5 17.2 0.5 10.2Z" fill="#2b2b2b" stroke="#6a6a6a"/><path d="M4 7.4H11" stroke="#6a6a6a"/></svg>
<svg class="i" style="left:458px;top:290px;" width="15" height="18" viewBox="0 0 15 18"><path d="M0.5 17.5H14.5V7.8L7.5 0.8 0.5 7.8Z" fill="#2b2b2b" stroke="#6a6a6a"/><path d="M4 10.6H11" stroke="#6a6a6a"/></svg>
<svg class="i" style="left:458px;top:422px;" width="15" height="18" viewBox="0 0 15 18"><path d="M0.5 17.5H14.5V7.8L7.5 0.8 0.5 7.8Z" fill="#2b2b2b" stroke="#6a6a6a"/><path d="M4 10.6H11" stroke="#6a6a6a"/></svg>
<svg class="i" style="left:428px;top:159px;" width="12.5" height="17" viewBox="0 0 12.5 17"><path d="M0 0 12.2 8.5 0 17Z" fill="#499c54"/></svg>
<svg class="i" style="left:428px;top:225px;" width="12.5" height="17" viewBox="0 0 12.5 17"><path d="M0 0 12.2 8.5 0 17Z" fill="#499c54"/></svg>
<svg class="i" style="left:1127.4px;top:92.6px;" width="12.5" height="10" viewBox="0 0 12.5 10"><path d="M1 4.8 4.5 8.2 11.4 1.2" fill="none" stroke="#499c54" stroke-width="2.4"/></svg>
<div style="left:1133px;top:339px;width:14px;height:2px;background:#008000;"></div>
<div style="left:834.4px;top:316px;width:84px;height:33px;background:#344134;"></div>
<div class="c" style="left:834.4px;top:317.736px;color:#a9b7c6;"><span style="color:#a9b7c6;">Student</span></div>
<div style="left:653.8px;top:319px;width:2px;height:27px;background:#bbbbbb;"></div>
<svg class="i" style="left:482.6px;top:322px;" width="11" height="14.5" viewBox="0 0 11 14.5"><path d="M5.5 0.3C2.5 0.3 0.3 2.6 0.3 5.4 0.3 7.2 1.3 8.4 2.6 9.4V10.4H8.4V9.4C9.7 8.4 10.7 7.2 10.7 5.4 10.7 2.6 8.5 0.3 5.5 0.3Z" fill="#f2a837"/><rect x="2.9" y="11.4" width="5.2" height="1" fill="#c9c9c9"/><rect x="3.4" y="13.2" width="4.2" height="1" fill="#c9c9c9"/></svg>
<div style="left:1148px;top:58px;width:760px;height:26px;background:#3c3f41;"></div>
<div style="left:1148px;top:84px;width:760px;height:1px;background:#323232;"></div>
<div style="left:1148px;top:58px;width:121px;height:24px;background:#4e5254;"></div>
<div style="left:1148px;top:82px;width:121px;height:3px;background:#747a80;"></div>
<svg class="i" style="left:1156px;top:63px;" width="16" height="16" viewBox="0 0 16 16"><circle cx="8" cy="8" r="7.05" fill="#3d8fad"/><path d="M9.9 6.2A2.7 2.7 0 1 0 9.9 9.9" fill="none" stroke="#294858" stroke-width="1.25"/></svg>
<span class="t" style="left:1176.6px;top:64px;line-height:16px;font-size:12.6px;letter-spacing:-0.079px;">Student.java</span>
<svg class="i" style="left:1249.1px;top:63.2px;" width="16" height="16" viewBox="0 0 16 16"><path d="M4.4 4.4L11.6 11.6M11.6 4.4L4.4 11.6" stroke="#6e7274" stroke-width="1.05"/></svg>
<svg class="i" style="left:1886.2px;top:63px;" width="16" height="16" viewBox="0 0 16 16"><circle cx="8" cy="3.2" r="1.25" fill="#afb1b3"/><circle cx="8" cy="8" r="1.25" fill="#afb1b3"/><circle cx="8" cy="12.8" r="1.25" fill="#afb1b3"/></svg>
<div style="left:1147px;top:85px;width:79px;height:614px;background:#313335;"></div>
<div style="left:1226px;top:85px;width:1px;height:614px;background:#555759;"></div>
<div style="left:1227px;top:85px;width:680px;height:614px;background:#2b2b2b;"></div>
<div style="left:1227px;top:382px;width:680px;height:33px;background:#323232;"></div>
<div style="left:1147px;top:382px;width:79px;height:33px;background:#333537;"></div>
<div style="left:1331.4px;top:382px;width:72px;height:33px;background:#344134;"></div>
<div style="left:1279px;top:349px;width:1px;height:66px;background:#393939;"></div>
<div class="c" style="left:1235.4px;top:86.7363px;color:#a9b7c6;"><span style="color:#cc7832;">package</span><span style="color:#a9b7c6;"> oop.demo01</span><span style="color:#cc7832;">;</span></div>
<div class="c" style="left:1235.4px;top:152.736px;color:#a9b7c6;"><span style="color:#808080;">//<span class="zr">学生类</span></span></div>
<div class="c" style="left:1235.4px;top:185.736px;color:#a9b7c6;"><span style="color:#cc7832;">public class</span><span style="color:#a9b7c6;"> Student {</span></div>
<div class="c" style="left:1235.4px;top:251.736px;color:#a9b7c6;"><span style="color:#808080;">    //<span class="zr">非静态方法</span></span></div>
<div class="c" style="left:1235.4px;top:317.736px;color:#a9b7c6;"><span style="color:#cc7832;">    public void</span><span style="color:#ffc66d;"> say</span><span style="color:#a9b7c6;">(){</span></div>
<div class="c" style="left:1235.4px;top:383.736px;color:#a9b7c6;"><span style="color:#a9b7c6;">        System.</span><span style="color:#9876aa;font-style:italic;">out</span><span style="color:#a9b7c6;">.println(</span><span style="color:#6a8759;">&quot;<span class="zr">学生说话了</span>&quot;</span><span style="color:#a9b7c6;">)</span><span style="color:#cc7832;">;</span></div>
<div class="c" style="left:1235.4px;top:416.736px;color:#a9b7c6;"><span style="color:#a9b7c6;">    }</span></div>
<div class="c" style="left:1235.4px;top:449.736px;color:#a9b7c6;"><span style="color:#a9b7c6;">}</span></div>
<div class="c" style="left:1115.8px;top:86.7363px;width:60px;text-align:right;color:#606366;">1</div>
<div class="c" style="left:1115.8px;top:119.736px;width:60px;text-align:right;color:#606366;">2</div>
<div class="c" style="left:1115.8px;top:152.736px;width:60px;text-align:right;color:#606366;">3</div>
<div class="c" style="left:1115.8px;top:185.736px;width:60px;text-align:right;color:#606366;">4</div>
<div class="c" style="left:1115.8px;top:218.736px;width:60px;text-align:right;color:#606366;">5</div>
<div class="c" style="left:1115.8px;top:251.736px;width:60px;text-align:right;color:#606366;">6</div>
<div class="c" style="left:1115.8px;top:317.736px;width:60px;text-align:right;color:#606366;">7</div>
<div class="c" style="left:1115.8px;top:350.736px;width:60px;text-align:right;color:#606366;">8</div>
<div class="c" style="left:1115.8px;top:383.736px;width:60px;text-align:right;color:#a4a3a3;">9</div>
<div class="c" style="left:1115.8px;top:416.736px;width:60px;text-align:right;color:#606366;">10</div>
<div class="c" style="left:1115.8px;top:449.736px;width:60px;text-align:right;color:#606366;">11</div>
<div class="c" style="left:1115.8px;top:482.736px;width:60px;text-align:right;color:#606366;">12</div>
<svg class="i" style="left:1219px;top:326px;" width="15" height="18" viewBox="0 0 15 18"><path d="M0.5 0.5H14.5V10.2L7.5 17.2 0.5 10.2Z" fill="#2b2b2b" stroke="#6a6a6a"/><path d="M4 7.4H11" stroke="#6a6a6a"/></svg>
<svg class="i" style="left:1219px;top:422px;" width="15" height="18" viewBox="0 0 15 18"><path d="M0.5 17.5H14.5V7.8L7.5 0.8 0.5 7.8Z" fill="#2b2b2b" stroke="#6a6a6a"/><path d="M4 10.6H11" stroke="#6a6a6a"/></svg>
<span class="t" style="left:1283.7px;top:284.5px;line-height:33px;font-size:19.95px;color:#808080;white-space:pre;">1 <span class="z" style="font-size:19px;">个用法</span></span>
<svg class="i" style="left:1886.4px;top:92.6px;" width="12.5" height="10" viewBox="0 0 12.5 10"><path d="M1 4.8 4.5 8.2 11.4 1.2" fill="none" stroke="#499c54" stroke-width="2.4"/></svg>
<div style="left:1893px;top:405px;width:14px;height:2px;background:#008000;"></div>
<div style="left:30px;top:699px;width:1877px;height:1px;background:#323232;"></div>
<div style="left:30px;top:700px;width:1877px;height:26px;background:#3c3f41;"></div>
<span class="t" style="left:36.2px;top:706px;line-height:16px;font-size:12.6px;letter-spacing:-0.701px;"><span class="z" style="font-size:12px;">运行</span>:</span>
<svg class="i" style="left:82px;top:704.5px;" width="16" height="16" viewBox="0 0 16 16"><path d="M4.5 4.5V1.5H14.5V10.5H12" fill="none" stroke="#50565a" stroke-width="1"/><rect x="1.5" y="4.5" width="10" height="9" fill="none" stroke="#606a70" stroke-width="1"/><rect x="1" y="4" width="11" height="2" fill="#606a70"/><rect x="3.2" y="7" width="6.6" height="5" fill="#2c4a57"/></svg>
<span class="t" style="left:102.5px;top:706px;line-height:16px;font-size:12.6px;letter-spacing:0.096px;">Demo02</span>
<svg class="i" style="left:154.2px;top:706.2px;" width="16" height="16" viewBox="0 0 16 16"><path d="M4.4 4.4L11.6 11.6M11.6 4.4L4.4 11.6" stroke="#6e7274" stroke-width="1.05"/></svg>
<div style="left:70px;top:724px;width:107px;height:3px;background:#747a80;border-radius:1.5px;"></div>
<svg class="i" style="left:1859.8px;top:705px;" width="16" height="16" viewBox="0 0 16 16"><g transform="translate(8 8)"><path d="M-1.9 -6.7H1.9L2.3 -3.6H-2.3Z" fill="#afb1b3" transform="rotate(0)"/><path d="M-1.9 -6.7H1.9L2.3 -3.6H-2.3Z" fill="#afb1b3" transform="rotate(60)"/><path d="M-1.9 -6.7H1.9L2.3 -3.6H-2.3Z" fill="#afb1b3" transform="rotate(120)"/><path d="M-1.9 -6.7H1.9L2.3 -3.6H-2.3Z" fill="#afb1b3" transform="rotate(180)"/><path d="M-1.9 -6.7H1.9L2.3 -3.6H-2.3Z" fill="#afb1b3" transform="rotate(240)"/><path d="M-1.9 -6.7H1.9L2.3 -3.6H-2.3Z" fill="#afb1b3" transform="rotate(300)"/><circle r="3.55" fill="none" stroke="#afb1b3" stroke-width="2.9"/></g></svg>
<svg class="i" style="left:1886px;top:705px;" width="16" height="16" viewBox="0 0 16 16"><rect x="2" y="7.3" width="12" height="1.5" fill="#afb1b3"/></svg>
<div style="left:30px;top:726px;width:28px;height:271px;background:#3c3f41;"></div>
<div style="left:58px;top:726px;width:1px;height:271px;background:#323232;"></div>
<div style="left:59px;top:726px;width:28px;height:271px;background:#3c3f41;"></div>
<div style="left:87px;top:727px;width:1820px;height:270px;background:#2b2b2b;"></div>
<svg class="i" style="left:37.3px;top:733px;" width="16" height="16" viewBox="0 0 16 16"><path d="M3.3 2 12.8 8 3.3 14Z" fill="#499c54"/></svg>
<svg class="i" style="left:36.3px;top:758.3px;" width="16" height="16" viewBox="0 0 16 16"><path d="M14.3 3.2 11.8 5.6 10.2 4.1 12.6 1.6C10.9 1 9 1.5 7.9 2.9 7 4.1 6.8 5.6 7.3 6.9L1.5 12.3C0.9 12.9 0.9 13.8 1.5 14.4 2.1 15 3 15 3.6 14.4L9.2 8.7C10.5 9.2 12.1 8.9 13.2 7.9 14.5 6.7 14.9 4.8 14.3 3.2Z" fill="#afb1b3"/></svg>
<div style="left:34px;top:783px;width:20px;height:1px;background:#555759;"></div>
<svg class="i" style="left:36px;top:791.8px;" width="16" height="16" viewBox="0 0 16 16"><rect x="3" y="3" width="10" height="10" fill="#5b5b5b"/></svg>
<svg class="i" style="left:36.6px;top:818.5px;" width="16" height="16" viewBox="0 0 16 16"><ellipse cx="7" cy="8.6" rx="3.6" ry="4.4" fill="#5e6163"/><circle cx="7" cy="4.1" r="2.1" fill="#5e6163"/><path d="M4.4 1 6 3.5M9.6 1 8 3.5M1 5.8H13M0.8 8.8H13.2M1.2 11.8H12.8" stroke="#5e6163" stroke-width="1.3"/><path d="M5 7.4H9M5 10.2H9" stroke="#3c3f41" stroke-width=".9"/><path d="M6.8 15.2 12.8 9.2" stroke="#3c3f41" stroke-width="4.4"/><path d="M9.4 7.6H15.4V13.6Z" fill="#3c3f41" stroke="#3c3f41" stroke-width="1.6"/><path d="M7.4 14.8 12.8 9.4" stroke="#5e6163" stroke-width="2"/><path d="M10 8.2H14.8V13Z" fill="#5e6163"/></svg>
<div style="left:34px;top:842px;width:20px;height:1px;background:#555759;"></div>
<svg class="i" style="left:36px;top:850.8px;" width="16" height="16" viewBox="0 0 16 16"><rect x="2" y="3" width="5.6" height="4.2" fill="#afb1b3"/><rect x="8.6" y="3" width="5.4" height="4.2" fill="#afb1b3"/><rect x="2" y="8.2" width="12" height="4.8" fill="#afb1b3"/></svg>
<div style="left:34px;top:875px;width:20px;height:1px;background:#555759;"></div>
<svg class="i" style="left:36px;top:884px;" width="16" height="16" viewBox="0 0 16 16"><path d="M9.3 1.2 14.8 6.7 13.3 7.4 12.4 7.2 10 10.3C10.4 11.4 10.2 12.5 9.4 13.4L2.6 6.6C3.5 5.8 4.6 5.6 5.7 6L8.8 3.6 8.6 2.7Z" fill="#afb1b3"/><path d="M5.6 10.4 1.2 14.8" stroke="#afb1b3" stroke-width="1.3"/></svg>
<svg class="i" style="left:65px;top:734px;" width="16" height="16" viewBox="0 0 16 16"><path d="M8 14V3M3.4 7.4 8 2.8 12.6 7.4" fill="none" stroke="#5e6163" stroke-width="1.5"/></svg>
<svg class="i" style="left:65px;top:760px;" width="16" height="16" viewBox="0 0 16 16"><path d="M8 2V13M3.4 8.6 8 13.2 12.6 8.6" fill="none" stroke="#5e6163" stroke-width="1.5"/></svg>
<svg class="i" style="left:65px;top:786.8px;" width="16" height="16" viewBox="0 0 16 16"><path d="M2 2.7H14M2 7H11.3C14.6 7 14.6 11.8 11.3 11.8H8.4" fill="none" stroke="#afb1b3" stroke-width="1.5"/><path d="M9.8 8.8 6.4 11.8 9.8 14.8Z" fill="#afb1b3"/><rect x="2" y="11" width="2.8" height="1.6" fill="#afb1b3"/></svg>
<div style="left:62px;top:809px;width:22px;height:22px;background:#595d5f;border-radius:3px;"></div>
<svg class="i" style="left:65px;top:812px;" width="16" height="16" viewBox="0 0 16 16"><path d="M2 3.2H6.4M2 7.4H6.4M2 13H14" stroke="#afb1b3" stroke-width="1.5"/><path d="M10.6 1.5V8" stroke="#afb1b3" stroke-width="1.6"/><path d="M7.2 6.6H14L10.6 10.6Z" fill="#afb1b3"/></svg>
<svg class="i" style="left:65px;top:838px;" width="16" height="16" viewBox="0 0 16 16"><rect x="4" y="1.6" width="8" height="2.8" fill="#afb1b3"/><path d="M1.2 5.4H14.8V11.4H12.2V9H3.8V11.4H1.2Z" fill="#afb1b3"/><rect x="4.6" y="10.2" width="6.8" height="4" fill="none" stroke="#afb1b3" stroke-width="1.3"/><circle cx="12.8" cy="7" r=".8" fill="#3c3f41"/></svg>
<svg class="i" style="left:65px;top:863.5px;" width="16" height="16" viewBox="0 0 16 16"><path d="M6 1.4H10V2.6H13.4V4.2H2.6V2.6H6Z" fill="#afb1b3"/><path d="M3.6 5.2H12.4V13.4C12.4 14.2 11.8 14.8 11 14.8H5C4.2 14.8 3.6 14.2 3.6 13.4Z" fill="#afb1b3"/></svg>
<div style="left:104px;top:727px;width:636px;height:33px;background:#393939;"></div>
<div class="c" style="left:104px;top:728.736px;color:#a9b7c6;"><span style="color:#8a8a8a;">&quot;C:\Program Files\Java\jdk1.8.0_202\bin\java.exe&quot; ...</span></div>
<div class="c" style="left:104px;top:761.736px;color:#a9b7c6;"><span style="color:#bbbbbb;"><span class="zr">学生说话了</span></span></div>
<div class="c" style="left:104px;top:827.736px;color:#a9b7c6;"><span style="color:#bbbbbb;"><span class="zr">进程已结束</span>,<span class="zr">退出代码</span>0</span></div>
<svg class="i" style="left:1876.1px;top:779.2px;" width="40" height="40" viewBox="0 0 40 40"><defs><linearGradient id="avg" x1="0" y1="0" x2="0" y2="1"><stop offset="0" stop-color="#ffffff"/><stop offset=".55" stop-color="#eef3ff"/><stop offset="1" stop-color="#b9ccf7"/></linearGradient><clipPath id="avc"><circle cx="20" cy="20" r="19.8"/></clipPath></defs><circle cx="20" cy="20" r="19.8" fill="url(#avg)"/><g clip-path="url(#avc)"><path d="M6 40C8 34 14 32.5 20 32.5S32 34 34 40Z" fill="#1b1b1d"/><path d="M16.5 28H23.5V34.5C21.5 36.5 18.5 36.5 16.5 34.5Z" fill="#f3cfc4"/><path d="M7.5 29.5C5 18 9 4.5 20 4 30.5 3.5 33.5 12 31.5 20 31 25 30.5 28 29.5 30H24L26 12 14 14 13 30Z" fill="#3b2a27"/><ellipse cx="21" cy="21" rx="8.4" ry="9.6" fill="#f6d9cf"/><ellipse cx="30.2" cy="22.5" rx="1.6" ry="2.4" fill="#efc3b6"/><path d="M10.5 30.5C7 22 9.5 8 20.5 6.2 27 5.4 31 9 31 17 27.5 15 24.5 12.5 23.2 9.2 20 13.5 15.5 16 13.8 19.5 13.6 24 13.6 28 14.2 30.5Z" fill="#45322e"/><ellipse cx="17.2" cy="22.2" rx="1.9" ry="1.5" fill="#17171a"/><ellipse cx="25.6" cy="22.2" rx="1.9" ry="1.5" fill="#17171a"/><ellipse cx="21.4" cy="28" rx="1.5" ry=".9" fill="#e39a94"/><ellipse cx="15.4" cy="25.6" rx="1.8" ry="1" fill="#f3bdb5" opacity=".7"/><ellipse cx="27.2" cy="25.6" rx="1.8" ry="1" fill="#f3bdb5" opacity=".7"/></g></svg>
<div style="left:8px;top:997px;width:1920px;height:1px;background:#323232;"></div>
<div style="left:8px;top:998px;width:1920px;height:21px;background:#3c3f41;"></div>
<div style="left:8px;top:1019px;width:1920px;height:1px;background:#484b4d;"></div>
<div style="left:8px;top:1020px;width:1920px;height:19px;background:#3c3f41;"></div>
<div style="left:8px;top:1039px;width:1920px;height:1px;background:#2a2c2d;"></div>
<svg class="i" style="left:42.2px;top:1003.6px;" width="11" height="12" viewBox="0 0 13 14"><circle cx="3.6" cy="2.6" r="1.9" fill="#afb1b3"/><circle cx="3.6" cy="11.4" r="1.9" fill="#afb1b3"/><circle cx="10" cy="4" r="1.9" fill="#afb1b3"/><path d="M3.6 3V11M10 4.6C10 8 3.6 7.4 3.6 10" fill="none" stroke="#afb1b3" stroke-width="1.7"/></svg>
<span class="t" style="left:58px;top:1003px;line-height:16px;font-size:11.55px;letter-spacing:0.066px;">Version Control</span>
<div style="left:151px;top:998px;width:57px;height:21px;background:#2d2f30;"></div>
<svg class="i" style="left:160.6px;top:1003px;" width="13" height="13" viewBox="0 0 13 13"><path d="M2.2 1 11 6.5 2.2 12Z" fill="#afb1b3"/></svg>
<span class="t" style="left:177.6px;top:1003px;line-height:16px;font-size:11.55px;color:#e0e0e0;"><span class="z" style="font-size:11px;">运行</span></span>
<svg class="i" style="left:219.4px;top:1004px;" width="11.3" height="11.3" viewBox="0 0 13 13"><rect x="0.5" y="1.6" width="2" height="1.9" fill="#afb1b3"/><rect x="3.8" y="1.6" width="8.2" height="1.9" fill="#afb1b3"/><rect x="0.5" y="5.6" width="2" height="1.9" fill="#afb1b3"/><rect x="3.8" y="5.6" width="8.2" height="1.9" fill="#afb1b3"/><rect x="0.5" y="9.6" width="2" height="1.9" fill="#afb1b3"/><rect x="3.8" y="9.6" width="8.2" height="1.9" fill="#afb1b3"/></svg>
<span class="t" style="left:235.5px;top:1003px;line-height:16px;font-size:11.55px;letter-spacing:-0.566px;">TODO</span>
<svg class="i" style="left:286px;top:1003px;" width="13" height="13" viewBox="0 0 13 13"><circle cx="6.5" cy="6.5" r="5.7" fill="#afb1b3"/><rect x="5.7" y="3" width="1.6" height="4.4" fill="#3c3f41"/><rect x="5.7" y="8.5" width="1.6" height="1.7" fill="#3c3f41"/></svg>
<span class="t" style="left:302.6px;top:1003px;line-height:16px;font-size:11.55px;"><span class="z" style="font-size:11px;">问题</span></span>
<svg class="i" style="left:343px;top:1003px;" width="13" height="13" viewBox="0 0 13 13"><rect x="0.8" y="1" width="11.4" height="10.6" fill="#afb1b3"/><path d="M2.8 3.4 5.6 5.9 2.8 8.4" fill="none" stroke="#3c3f41" stroke-width="1.2"/><rect x="6.2" y="8.4" width="3.6" height="1.1" fill="#3c3f41"/></svg>
<span class="t" style="left:359.6px;top:1003px;line-height:16px;font-size:11.55px;"><span class="z" style="font-size:11px;">终端</span></span>
<svg class="i" style="left:399.7px;top:1003px;" width="13.2" height="13" viewBox="0 0 13.2 13"><path d="M3.6 0.6H9.6L12.8 6.5 9.6 12.4H3.6L0.4 6.5Z" fill="#afb1b3"/><path d="M5 3.6 9.4 6.5 5 9.4Z" fill="#3c3f41"/></svg>
<span class="t" style="left:416.8px;top:1003px;line-height:16px;font-size:11.55px;"><span class="z" style="font-size:11px;">服务</span></span>
<svg class="i" style="left:456.6px;top:1003.6px;" width="13" height="13" viewBox="0 0 13 13"><path d="M0.4 4.6 5.2 0.4 8 1 7.2 2.8 12.6 9.8 10.2 11.8 4.9 4.8 2.4 6.9Z" fill="#afb1b3"/></svg>
<span class="t" style="left:474px;top:1003px;line-height:16px;font-size:11.55px;"><span class="z" style="font-size:11px;">构建</span></span>
<svg class="i" style="left:513.8px;top:1002.6px;" width="13" height="14" viewBox="0 0 13 14"><path d="M6.5 0.6 12.6 3.9 6.5 7.2 0.4 3.9Z" fill="#afb1b3"/><path d="M0.6 6.6 6.5 9.8 12.4 6.6M0.6 9.4 6.5 12.6 12.4 9.4" fill="none" stroke="#afb1b3" stroke-width="1.3"/></svg>
<span class="t" style="left:531.2px;top:1003px;line-height:16px;font-size:11.55px;"><span class="z" style="font-size:11px;">依赖项</span></span>
<svg class="i" style="left:14px;top:1023.6px;" width="12" height="12" viewBox="0 0 12 12"><rect x="0.5" y="2.5" width="9" height="9" fill="none" stroke="#afb1b3"/><path d="M2.5 2.5V0.5H11.5V9.5H9.5" fill="none" stroke="#afb1b3"/></svg>
<span class="t" style="left:35px;top:1022px;line-height:16px;font-size:12.6px;letter-spacing:0.124px;"><span class="z" style="font-size:12px;">构建在</span> 1<span class="z" style="font-size:12px;">秒</span>213<span class="z" style="font-size:12px;">毫秒内成功完成</span> (3 <span class="z" style="font-size:12px;">分钟</span> <span class="z" style="font-size:12px;">之前</span>)</span>
<span class="t" style="left:1723.8px;top:1022px;line-height:16px;font-size:12.6px;letter-spacing:0.019px;">8:16</span>
<span class="t" style="left:1760.3px;top:1022px;line-height:16px;font-size:12.6px;letter-spacing:-1.226px;">CRLF</span>
<span class="t" style="left:1800.3px;top:1022px;line-height:16px;font-size:12.6px;letter-spacing:-0.459px;">UTF-8</span>
<span class="t" style="left:1845.7px;top:1022px;line-height:16px;font-size:12.6px;letter-spacing:0.296px;">4 <span class="z" style="font-size:12px;">个空格</span></span>
<svg class="i" style="left:1903.6px;top:1023.4px;" width="12" height="12" viewBox="0 0 12 12"><rect x="3.2" y="5.6" width="8.2" height="6.4" fill="#afb1b3"/><path d="M1.4 5.6V3.4C1.4 0.6 5.2 0.6 5.2 3.4V5.6" fill="none" stroke="#afb1b3" stroke-width="1.3"/></svg>
</body></html>
